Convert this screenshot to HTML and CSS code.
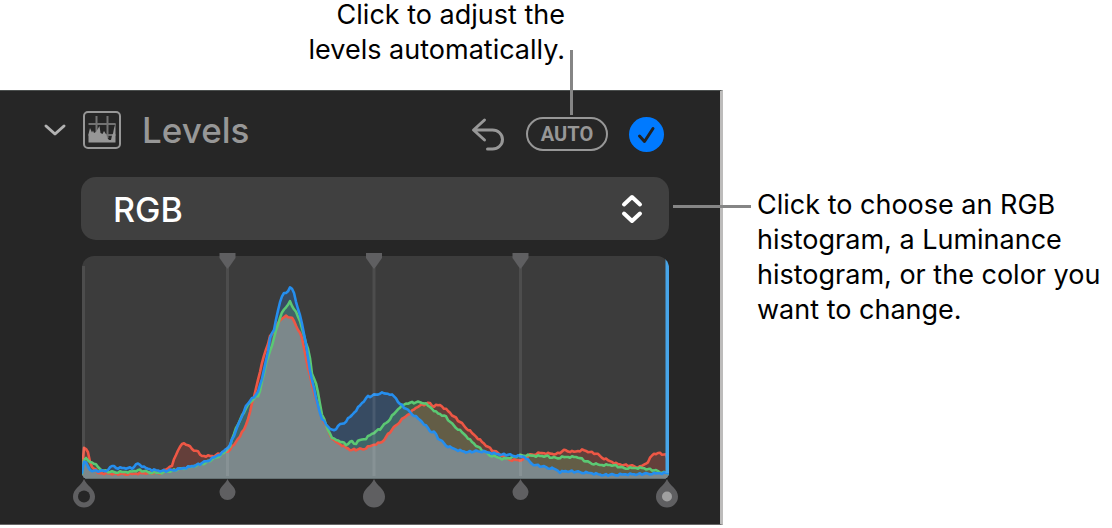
FILE: index.html
```html
<!DOCTYPE html>
<html lang="en">
<head>
<meta charset="utf-8">
<title>Levels</title>
<link rel="stylesheet" href="styles.css">
</head>
<body>
<main class="figure">
  <p class="note note-top">Click to adjust the<br>levels automatically.</p>
  <section class="panel" aria-labelledby="levels-title">
    <header class="panel-header">
      <div class="title-group">
        <button class="icon-button" type="button" aria-label="Collapse Levels">
          <svg width="24" height="16" viewBox="0 0 24 16"><path class="chevron" d="M3 4l9 8 9-8"/></svg>
        </button>
        <svg class="levels-icon" width="38" height="38" viewBox="0 0 38 38" aria-hidden="true">
          <rect class="frame" x="1" y="1" width="36" height="36" rx="4"/>
          <path class="grid" d="M13.500 5v22M24.500 5v22M5.500 13h27M5.500 24h27"/>
          <path class="peaks" d="M5.500 31.500V23l1.500-6 2 4.500 1-2 1 2.500 2-1 3.500-6 1 7 2 1 1.500-3 2.500 4 1 3 1.500 2H28l1-4.500 1-2 1-5 1.500-5.500v19.500z"/>
        </svg>
        <h1 class="panel-title" id="levels-title">Levels</h1>
      </div>
      <div class="actions">
        <button class="icon-button" type="button" aria-label="Reset">
          <svg width="34" height="34" viewBox="0 0 34 34"><path class="undo" d="M13.500 3L2.500 13l11 10M3 13h18.500a10 9.500 0 0 1 0 19H16.500"/></svg>
        </button>
        <button class="auto" type="button">AUTO</button>
        <label class="toggle">
          <input type="checkbox" checked aria-label="Levels adjustment on">
          <svg class="tick" width="35" height="35" viewBox="0 0 35 35" aria-hidden="true"><path d="M10.500 19l5 5.500L24 11.500"/></svg>
        </label>
      </div>
    </header>
    <div class="channel">
      <select class="channel-select" aria-label="Histogram channel">
        <option>RGB</option>
        <option>Luminance</option>
      </select>
      <svg class="updown" width="22" height="30" viewBox="0 0 22 30" aria-hidden="true"><path d="M3 10.500l8-7.500 8 7.500M3 19.500l8 7.500 8-7.500"/></svg>
    </div>
    <svg class="histogram" viewBox="81 253 588 257" role="img" aria-label="RGB histogram">
      <defs>
        <path id="area-r"/><path id="area-g"/><path id="area-b"/>
        <clipPath id="plot"><path d="M94 256H657A12 12 0 0 1 669 268V473A6 6 0 0 1 663 479H88A6 6 0 0 1 82 473V268A12 12 0 0 1 94 256z"/></clipPath>
        <clipPath id="in-g"><use href="#area-g"/></clipPath>
        <clipPath id="in-b"><use href="#area-b"/></clipPath>
        <path id="drop" d="M0 0C2 5 8 8 8 13A8 8 0 0 1-8 13C-8 8-2 5 0 0z"/>
        <path id="drop-large" d="M0 0C3 7 11 10 11 17.500A11 11 0 0 1-11 17.500C-11 10-3 7 0 0z"/>
        <path id="pointer" d="M-8 0H8V5L1 15Q0 16-1 15L-8 5z"/>
      </defs>
      <g clip-path="url(#plot)">
        <rect class="plot-bg" x="81" y="255" width="588" height="225"/>
        <use class="fill-r" href="#area-r"/>
        <use class="fill-g" href="#area-g"/>
        <use class="fill-b" href="#area-b"/>
        <g clip-path="url(#in-g)"><use class="fill-rg" href="#area-r"/></g>
        <g clip-path="url(#in-b)"><use class="fill-gb" href="#area-g"/></g>
        <g clip-path="url(#in-b)"><use class="fill-rb" href="#area-r"/></g>
        <g clip-path="url(#in-b)"><g clip-path="url(#in-g)"><use class="fill-rgb" href="#area-r"/></g></g>
        <path class="line-r"/>
        <path class="line-g"/>
        <path class="line-b"/>
        <path class="guides" d="M83.500 266V459M227.500 268V476M374 268V476M520.500 268V476"/>
        <path class="baseline" d="M82 478.500H669"/>
        <path class="clip-edge" d="M667.500 256V473"/>
      </g>
      <g class="handles">
        <use href="#pointer" x="227.500" y="253"/>
        <use href="#pointer" x="374" y="253"/>
        <use href="#pointer" x="520.500" y="253"/>
        <use href="#drop-large" x="84" y="479"/>
        <use href="#drop" x="227.500" y="479"/>
        <use href="#drop-large" x="374" y="479"/>
        <use href="#drop" x="520.500" y="479"/>
        <use href="#drop-large" x="667" y="479"/>
      </g>
      <circle class="dot-dark" cx="84" cy="496.500" r="6"/>
      <circle class="dot-light" cx="667" cy="496.500" r="5"/>
    </svg>
  </section>
  <p class="note note-side">Click to choose an RGB histogram, a Luminance histogram, or the color you want to change.</p>
</main>
<script src="histogram.js"></script>
</body>
</html>
```
FILE: styles.css
```css
* { box-sizing: border-box; }
body {
  margin: 0;
  background: #fff;
  color: #000;
  font-family: Inter, "Liberation Sans", sans-serif;
}
svg { display: block; flex: none; fill: none; }
.figure {
  display: grid;
  grid-template-columns: minmax(0, 1fr) 355px;
  grid-template-rows: 90px auto;
  column-gap: 34px;
}
.note { margin: 0; font-size: 27px; line-height: 35px; }
.note-top { padding: 0 158px 0 0; margin-top: -3px; text-align: right; }
.note-side { grid-column: 2; grid-row: 2; padding-top: 97px; }
.panel {
  grid-column: 1;
  grid-row: 2;
  padding: 0 51px 14px 81px;
  background: #262626;
  border-top: 1px solid #4b4f4e;
  border-right: 3px solid #bdbcbb;
  border-bottom: 1px solid #666;
}
.panel-header {
  display: flex;
  align-items: center;
  justify-content: space-between;
  height: 86px;
  margin-left: -38px;
  padding-right: 5px;
}
.title-group { display: flex; align-items: center; padding-bottom: 8px; }
.icon-button { padding: 0; border: 0; background: none; }
.chevron { stroke: #b2b2b2; stroke-width: 3; stroke-linecap: round; stroke-linejoin: round; }
.levels-icon { margin: 0 21px 0 16px; }
.frame { stroke: #979797; stroke-width: 2; }
.grid { stroke: #737373; stroke-width: 2; }
.peaks { fill: #979797; }
.panel-title { margin: 0; color: #979797; font-size: 35px; line-height: 44px; font-weight: 500; }
.actions { display: flex; align-items: center; gap: 21px; }
.undo { stroke: #979797; stroke-width: 3; stroke-linecap: round; stroke-linejoin: round; }
.auto {
  position: relative;
  width: 82px;
  height: 34px;
  padding: 0;
  border: 2px solid #979797;
  border-radius: 17px;
  background: none;
  color: #979797;
  font: 700 20px/30px Roboto, sans-serif;
}
.auto::before {
  content: "";
  position: absolute;
  left: 42px;
  bottom: 34px;
  width: 3px;
  height: 65px;
  background: #858585;
}
.toggle { position: relative; display: block; width: 35px; height: 35px; }
.toggle input {
  appearance: none;
  display: block;
  width: 100%;
  height: 100%;
  margin: 0;
  border-radius: 50%;
}
.toggle input:checked { background: #007aff; }
.tick { position: absolute; inset: 0; stroke: #222; stroke-width: 3; stroke-linecap: round; stroke-linejoin: round; pointer-events: none; }
.channel { position: relative; margin-bottom: 13px; }
.channel-select {
  appearance: none;
  display: block;
  width: 100%;
  height: 63px;
  padding: 2px 32px 0;
  border: 0;
  border-radius: 15px;
  background: #404040;
  color: #fff;
  font: 500 34px/44px Inter, sans-serif;
}
.updown { position: absolute; right: 26px; top: 17px; stroke: #fff; stroke-width: 4; stroke-linecap: round; stroke-linejoin: round; pointer-events: none; }
.channel::after {
  content: "";
  position: absolute;
  left: calc(100% + 4px);
  top: 28px;
  width: 78px;
  height: 3px;
  background: #858585;
}
.histogram { width: 100%; height: auto; overflow: visible; }
.plot-bg { fill: #3c3c3c; }
.fill-r { fill: #643f3a; }
.fill-g { fill: #3c6048; }
.fill-b { fill: #374b62; }
.fill-rg { fill: #635d46; }
.fill-gb { fill: #3f6568; }
.fill-rb { fill: #68587a; }
.fill-rgb { fill: #7c888b; }
.line-r, .line-g, .line-b { stroke-width: 2.6; stroke-linejoin: round; }
.line-r { stroke: #ee5745; }
.line-g { stroke: #5bc873; }
.line-b { stroke: #258eee; }
.guides { stroke: #fff; stroke-opacity: .09; stroke-width: 3; }
.baseline { stroke: #657173; }
.clip-edge { stroke: #47a5e9; stroke-width: 4; }
.handles { fill: #5f5f61; }
.dot-dark { fill: #262626; }
.dot-light { fill: #a0a0a0; }
```
FILE: histogram.js
```js
// Channel curves as x,y pairs in the chart's own units.
const curves = {
  r: "82,470 84,447 86,449 88,453 89,459 91,465 95,469 98,473 120,474 130,474 145,473 160,473 167,469 172,465 174,460 176,455 180,446 182,444 186,444 189,446 193,450 196,450 198,452 201,456 214,456 221,453 228,451 234,445 245,428 250,412 255,392 259,377 263,357 267,348 270,336 273,333 278,323 282,318 287,316 293,319 297,327 302,338 307,363 312,385 317,403 322,418 327,428 333,440 338,443 345,447 351,450 363,449 373,445 382,442 390,432 400,421 410,413 418,406 430,403 433,406 440,405 448,411 460,422 472,433 482,442 492,450 500,454 510,460 523,460 530,455 540,453 557,454 565,450 573,452 583,450 597,454 605,459 617,464 640,467 647,463 653,454 658,453 666,455",
  g: "82,473 83,461 85,458 90,462 94,463 100,469 105,471 110,472 130,472 138,470 148,472 160,473 170,471 180,469 190,467 205,463 215,458 224,453 230,446 236,428 245,410 251,401 255,397 259,396 262,381 267,360 272,345 276,331 279,320 283,311 287,305 290,302 293,308 297,313 301,325 305,339 309,352 312,373 317,387 322,414 328,430 333,439 340,441 347,445 352,441 355,444 360,440 365,439 373,433 380,429 387,422 393,415 400,407 407,403 423,402 430,407 437,413 445,416 452,424 463,433 472,442 482,450 490,455 503,459 513,457 523,455 537,456 547,456 553,458 565,457 578,457 587,462 600,465 613,465 623,468 643,468 657,471 666,473",
  b: "82,473 84,461 86,463 90,470 95,471 105,471 110,468 113,465 116,468 133,468 137,464 139,463 143,467 152,470 165,471 185,468 200,464 213,458 222,453 230,445 237,428 245,408 252,398 257,395 262,378 267,357 270,338 274,330 277,313 280,303 283,293 287,293 289,288 293,289 295,297 298,309 302,323 306,345 310,370 316,398 321,417 327,426 334,431 338,426 345,422 353,414 362,403 367,397 375,395 380,393 390,394 395,397 400,404 410,412 420,420 428,428 431,433 433,430 438,438 447,446 457,450 467,452 480,451 497,454 510,455 525,457 532,464 540,466 555,469 560,472 567,471 590,473 603,475 640,474 666,473"
};
const grain = [0, 1, -1, 0, 0, 1, 0, -1, 1, 0, -1, 0, 1, 1, -1, 0, 0];

Object.entries(curves).forEach(([channel, text], offset) => {
  const points = text.split(" ").map(pair => pair.split(",").map(Number));
  let path = "M78 490L78 473";
  let i = 0;
  for (let x = 82; x <= 666; x += 2) {
    while (i < points.length - 2 && points[i + 1][0] < x) i++;
    const [x0, y0] = points[i];
    const [x1, y1] = points[i + 1];
    const y = y0 + (y1 - y0) * (x - x0) / (x1 - x0);
    const noise = grain[(x / 2 + offset * 5) % grain.length] * 0.8;
    path += "L" + x + " " + (y + noise).toFixed(1);
  }
  path += "L672 474L672 490z";
  document.getElementById("area-" + channel).setAttribute("d", path);
  document.querySelector(".line-" + channel).setAttribute("d", path);
});
```
